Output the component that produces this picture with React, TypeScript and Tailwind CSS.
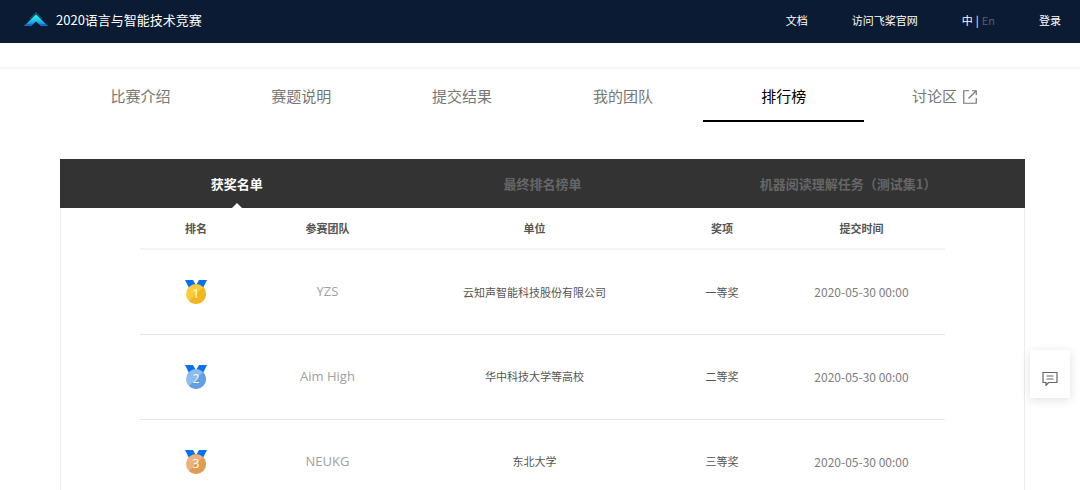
import React, { useState } from "react";
import clsx from "clsx";

interface Award {
  rank: number;
  team: string;
  org: string;
  prize: string;
  time: string;
}

const tabs = ["比赛介绍", "赛题说明", "提交结果", "我的团队", "排行榜", "讨论区"];

const boards = ["获奖名单", "最终排名榜单", "机器阅读理解任务（测试集1）"];

const awards: Award[] = [
  {
    rank: 1,
    team: "YZS",
    org: "云知声智能科技股份有限公司",
    prize: "一等奖",
    time: "2020-05-30 00:00",
  },
  {
    rank: 2,
    team: "Aim High",
    org: "华中科技大学等高校",
    prize: "二等奖",
    time: "2020-05-30 00:00",
  },
  {
    rank: 3,
    team: "NEUKG",
    org: "东北大学",
    prize: "三等奖",
    time: "2020-05-30 00:00",
  },
];

const medalColors = [
  { light: "#fbcb3f", dark: "#f2b524" },
  { light: "#8dbcf0", dark: "#659fe2" },
  { light: "#eab27c", dark: "#df9c55" },
];

const Logo = () => (
  <svg width="24" height="16" viewBox="0 0 24 16" aria-hidden="true">
    <defs>
      <linearGradient id="peak" x1="0" y1="0" x2="0" y2="1">
        <stop offset="0" stopColor="#3df5ea" />
        <stop offset="0.45" stopColor="#22cdee" />
        <stop offset="1" stopColor="#0c78cf" />
      </linearGradient>
    </defs>
    <path d="M12 0 18.5 6.5 17 7 12 2.5 7 7 5.5 6.5Z" fill="#0f5a72" />
    <path d="M12 2.5 24 14H17L12 9.5 7 14H0Z" fill="url(#peak)" />
    <path d="M2.5 12H9.3L7 14H0Z" fill="#0d6fc4" />
    <path d="M21.5 12H14.7L17 14H24Z" fill="#0d6fc4" />
  </svg>
);

const Medal = ({ rank }: { rank: number }) => {
  const { light, dark } = medalColors[rank - 1];
  return (
    <svg
      width="24"
      height="26"
      viewBox="0 0 24 26"
      className="mx-auto block"
      role="img"
      aria-label={`第${rank}名`}
    >
      <path d="M1 1H9L13 8 5 9Z" fill="#0a6fe8" />
      <path d="M23 1H15L11 8 19 9Z" fill="#0a6fe8" />
      <circle cx="12" cy="15" r="10" fill={light} />
      <path d="M19.1 7.9A10 10 0 0 1 4.9 22.1Z" fill={dark} />
      <text
        x="12"
        y="19"
        textAnchor="middle"
        fontSize="12"
        fontWeight="500"
        fill="#fff"
        fontFamily="'Open Sans', sans-serif"
      >
        {rank}
      </text>
    </svg>
  );
};

const ExternalIcon = () => (
  <svg
    width="14"
    height="14"
    viewBox="0 0 14 14"
    fill="none"
    stroke="currentColor"
    strokeWidth="1.2"
    aria-hidden="true"
  >
    <path d="M6 .75H.75V13.25H13.25V8" />
    <path d="M9 .75H13.25V5" />
    <path d="M13 1 5.5 8.5" />
  </svg>
);

const Header = () => (
  <header className="flex h-[43px] items-center justify-between bg-[#0b1b33] pr-[19px] pl-6 text-white">
    <a href="#" className="flex items-center gap-2 pb-1 text-[13px] leading-5">
      <Logo />
      2020语言与智能技术竞赛
    </a>
    <nav className="flex items-center gap-11 pb-1 text-[11px] leading-5">
      <a href="#">文档</a>
      <a href="#">访问飞桨官网</a>
      <div className="flex gap-[3px]">
        <button type="button">中</button>
        <span>|</span>
        <button type="button" className="text-[#53606f]">
          En
        </button>
      </div>
      <a href="#">登录</a>
    </nav>
  </header>
);

function AwardTable() {
  return (
    <table className="w-full table-fixed text-center text-[11px] text-[#555]">
      <thead>
        <tr className="h-[41px] border-b-2 border-[#f3f3f3]">
          <th className="w-[112px] font-bold">排名</th>
          <th className="w-[151px] font-bold">参赛团队</th>
          <th className="font-bold">单位</th>
          <th className="w-[112px] font-bold">奖项</th>
          <th className="w-[167px] font-bold">提交时间</th>
        </tr>
      </thead>
      <tbody>
        {awards.map(({ rank, team, org, prize, time }) => (
          <tr key={rank} className="h-[85px] border-b border-[#e5e5e5]">
            <td>
              <Medal rank={rank} />
            </td>
            <td className="font-['Open_Sans',sans-serif] text-[13px] text-[#a0a0a0]">
              {team}
            </td>
            <td>{org}</td>
            <td>{prize}</td>
            <td className="text-xs text-[#7d7d7d]">{time}</td>
          </tr>
        ))}
      </tbody>
    </table>
  );
}

export default function App() {
  const [tab, setTab] = useState(4);
  const [board, setBoard] = useState(0);

  return (
    <div className="h-screen overflow-x-hidden overflow-y-auto bg-white font-['Noto_Sans_CJK_SC',sans-serif] [scrollbar-width:none]">
      <Header />
      <div className="h-[26px] border-b-2 border-[#f5f5f5]" />
      <main className="pr-[55px] pl-[60px]">
        <nav className="grid grid-cols-6">
          {tabs.map((name, index) => (
            <button
              key={name}
              type="button"
              onClick={() => setTab(index)}
              className={clsx(
                "flex h-[53px] items-center justify-center gap-1.5 border-b-2 pt-1 text-[15px]",
                index === tab
                  ? "border-black text-black"
                  : "border-transparent text-[#777]"
              )}
            >
              {name}
              {index === 5 && <ExternalIcon />}
            </button>
          ))}
        </nav>
        <section className="mt-[37px]">
          <div className="grid h-[49px] grid-cols-3 bg-[#333] px-6">
            {boards.map((name, index) => (
              <button
                key={name}
                type="button"
                onClick={() => setBoard(index)}
                className={clsx(
                  "relative text-[13px] font-bold",
                  index === board ? "text-white" : "text-[#666]"
                )}
              >
                {name}
                {index === board && (
                  <span className="absolute bottom-0 left-1/2 -translate-x-1/2 border-x-5 border-b-5 border-x-transparent border-b-white" />
                )}
              </button>
            ))}
          </div>
          <div className="border-x border-[#ececec] px-[79px]">
            <AwardTable />
          </div>
        </section>
      </main>
      <button
        type="button"
        aria-label="反馈"
        className="fixed right-2.5 bottom-[92px] flex h-12 w-10 items-center justify-center bg-white pt-2 text-[#666] shadow-[0_2px_10px_rgba(0,0,0,0.12)]"
      >
        <svg
          width="16"
          height="16"
          viewBox="0 0 16 16"
          fill="none"
          stroke="currentColor"
          strokeWidth="1.2"
        >
          <path d="M1 2.5H15V12.5H6.5L4 15.5V12.5H1Z" />
          <path d="M4.5 6H11.5M4.5 9H11.5" />
        </svg>
      </button>
    </div>
  );
}
